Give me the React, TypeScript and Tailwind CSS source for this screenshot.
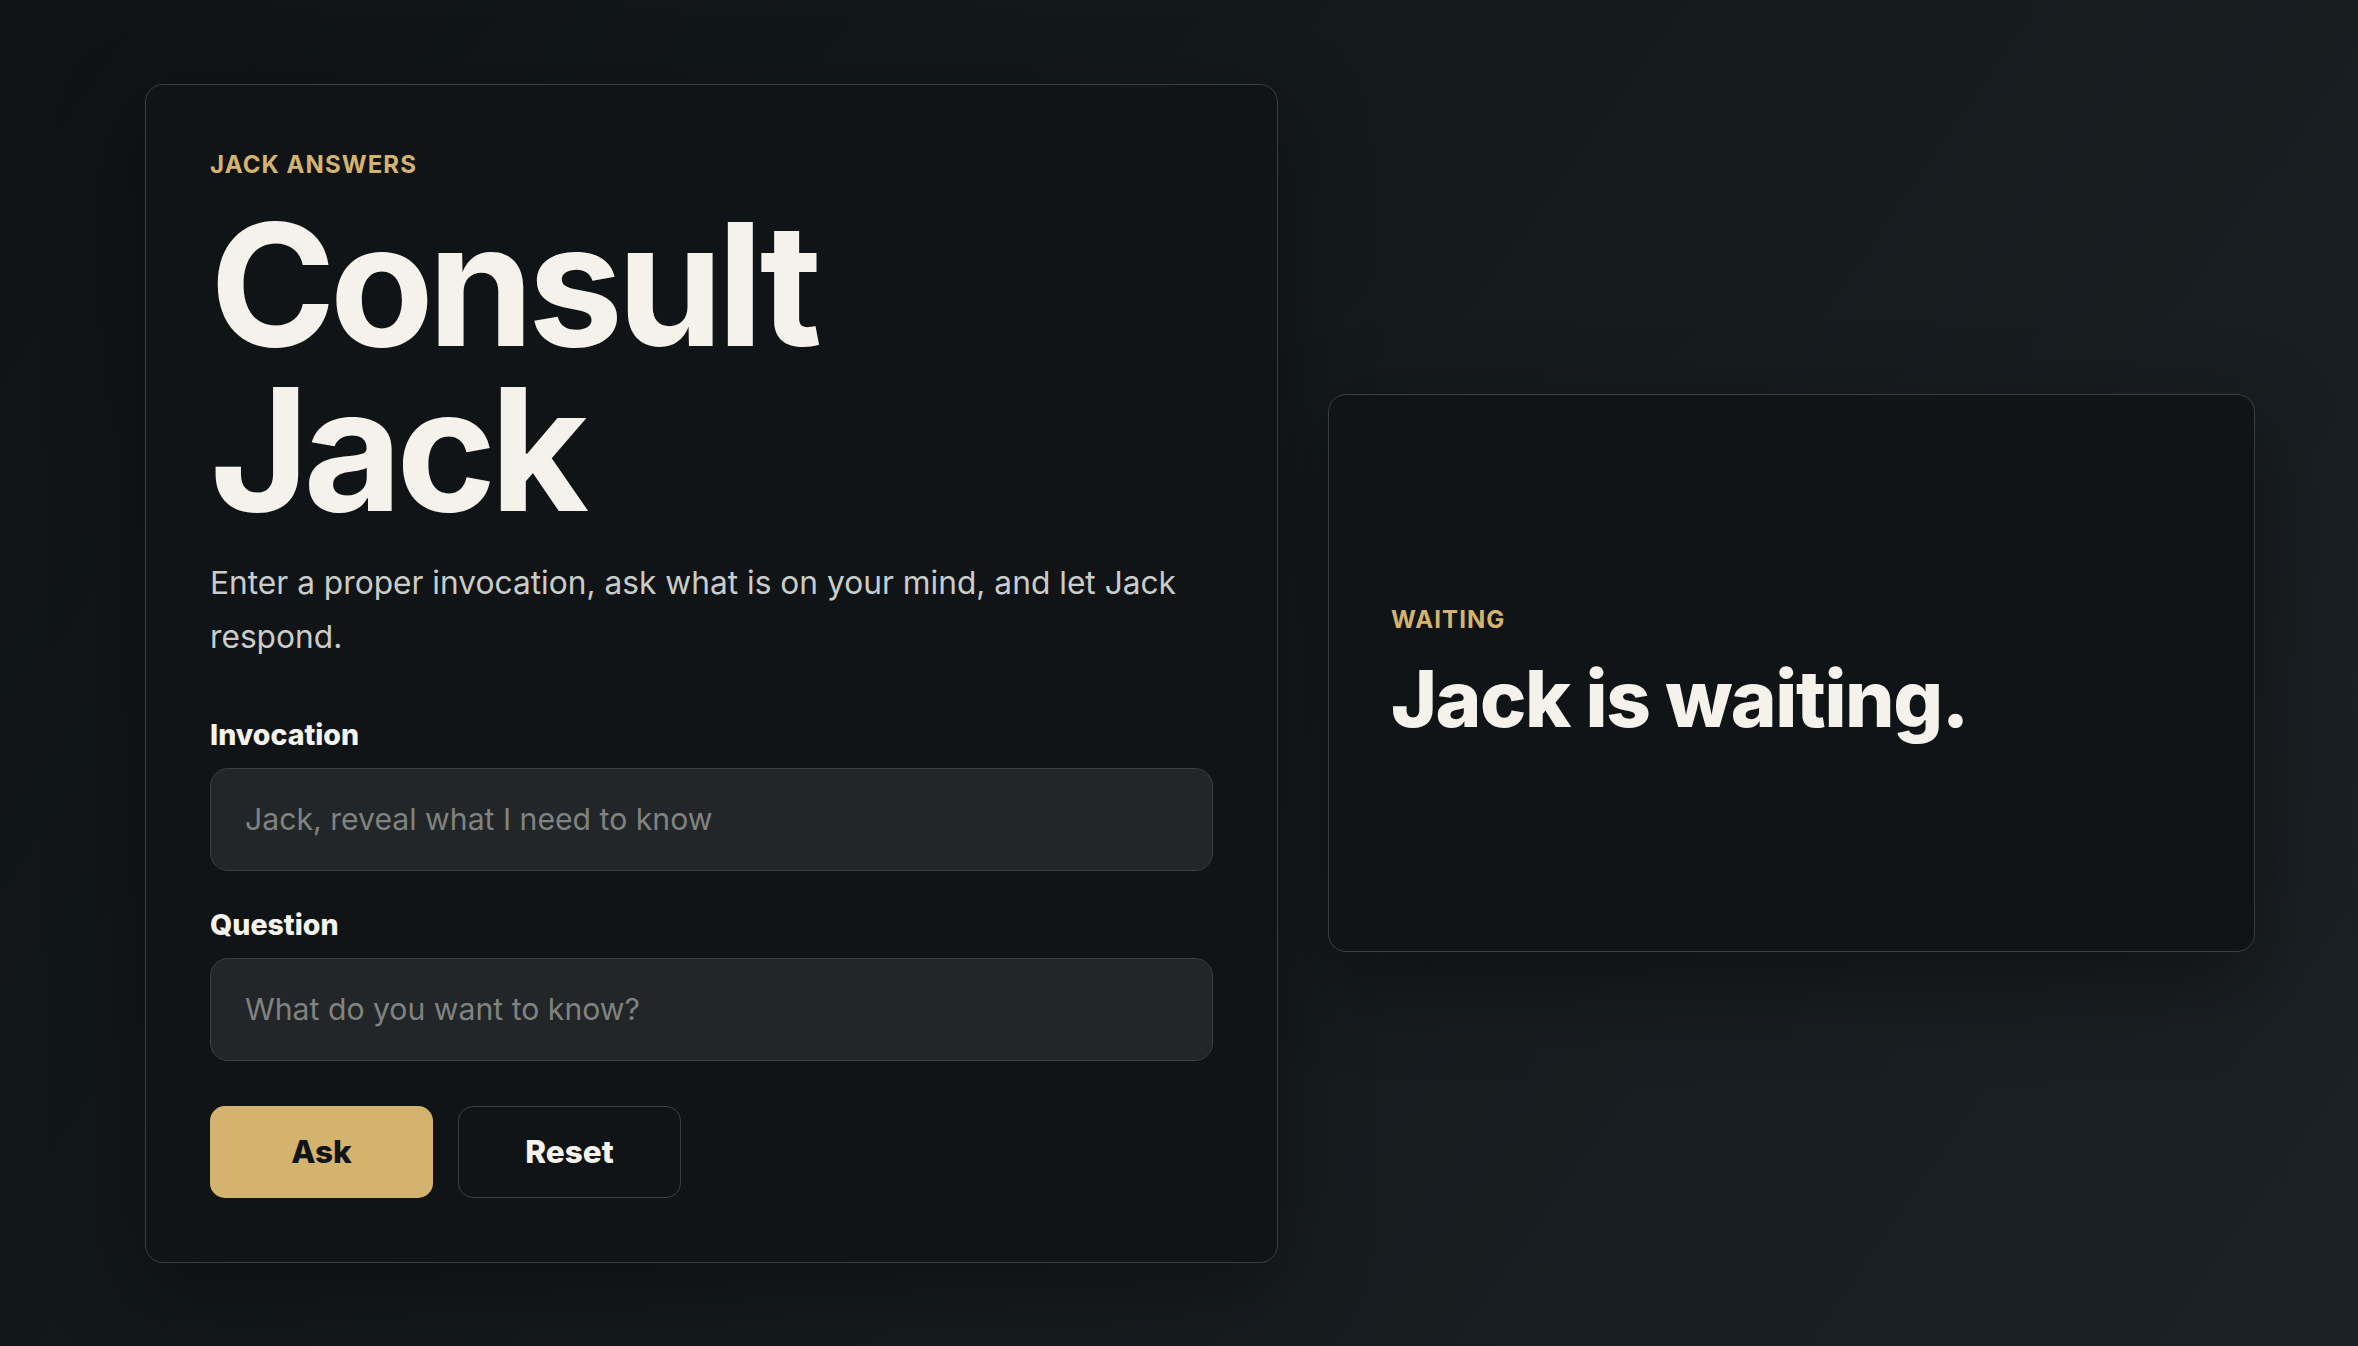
import React, { useState } from 'react';

export default function App() {
    const [invocation, setInvocation] = useState('');
    const [question, setQuestion] = useState('');

    const handleReset = () => {
        setInvocation('');
        setQuestion('');
    };

    return (
        <div className="min-h-screen w-full bg-[linear-gradient(125deg,#0f1316_0%,#151a1d_50%,#1c2125_100%)] flex items-center gap-[50px] pl-[145px] pr-[103px] py-[83px] font-['Inter','Noto_Sans',sans-serif] text-[#f5f2ec]">
            {/* Ask form */}
            <section className="w-[1133px] shrink-0 rounded-[18px] border border-[#3c3f42] bg-[#101417] p-[64px] shadow-[0_30px_90px_rgba(0,0,0,0.35)]">
                <div className="text-[24px] leading-[32px] font-bold uppercase tracking-[0.045em] text-[#d4b36f]">Jack Answers</div>
                <h1 className="mt-[21px] text-[170px] leading-[165px] font-bold tracking-[-0.035em] text-[#f5f2ec]">
                    Consult
                    <br />
                    Jack
                </h1>
                <p className="mt-[24px] text-[31.7px] leading-[54px] text-[#c9ccc8]">
                    Enter a proper invocation, ask what is on your mind, and let Jack respond.
                </p>

                <div className="mt-[53px] flex flex-col gap-[36px]">
                    <label className="flex flex-col gap-[15px]">
                        <span className="text-[28.5px] leading-[36px] font-extrabold">Invocation</span>
                        <input
                            type="text"
                            value={invocation}
                            onChange={(e) => setInvocation(e.target.value)}
                            placeholder="Jack, reveal what I need to know"
                            className="h-[103px] w-full rounded-[18px] border border-[#3c3f42] bg-[#222629] px-[34px] text-[30.2px] text-[#f5f2ec] placeholder:text-[#80837f] focus:outline-none"
                        />
                    </label>
                    <label className="flex flex-col gap-[15px]">
                        <span className="text-[28.5px] leading-[36px] font-extrabold">Question</span>
                        <input
                            type="text"
                            value={question}
                            onChange={(e) => setQuestion(e.target.value)}
                            placeholder="What do you want to know?"
                            className="h-[103px] w-full rounded-[18px] border border-[#3c3f42] bg-[#222629] px-[34px] text-[30.2px] text-[#f5f2ec] placeholder:text-[#80837f] focus:outline-none"
                        />
                    </label>
                </div>

                <div className="mt-[45px] flex gap-[25px]">
                    <button className="h-[92px] w-[223px] rounded-[15px] bg-[#d4b36f] text-[31.5px] font-extrabold text-[#111518]">Ask</button>
                    <button
                        onClick={handleReset}
                        className="h-[92px] w-[223px] rounded-[15px] border border-[#3c3f42] bg-[#101417] text-[31.5px] font-extrabold text-[#f5f2ec]"
                    >
                        Reset
                    </button>
                </div>
            </section>

            {/* Answer panel */}
            <section className="w-[927px] shrink-0 min-h-[558px] flex flex-col justify-center rounded-[18px] border border-[#3c3f42] bg-[#101417] px-[62px] shadow-[0_30px_90px_rgba(0,0,0,0.4)]">
                <div className="text-[24px] leading-[32px] font-bold uppercase tracking-[0.045em] text-[#d4b36f]">Waiting</div>
                <h2 className="mt-[20px] text-[78px] leading-[86px] font-extrabold tracking-[-0.018em] text-[#f5f2ec]">Jack is waiting.</h2>
            </section>
        </div>
    );
}
